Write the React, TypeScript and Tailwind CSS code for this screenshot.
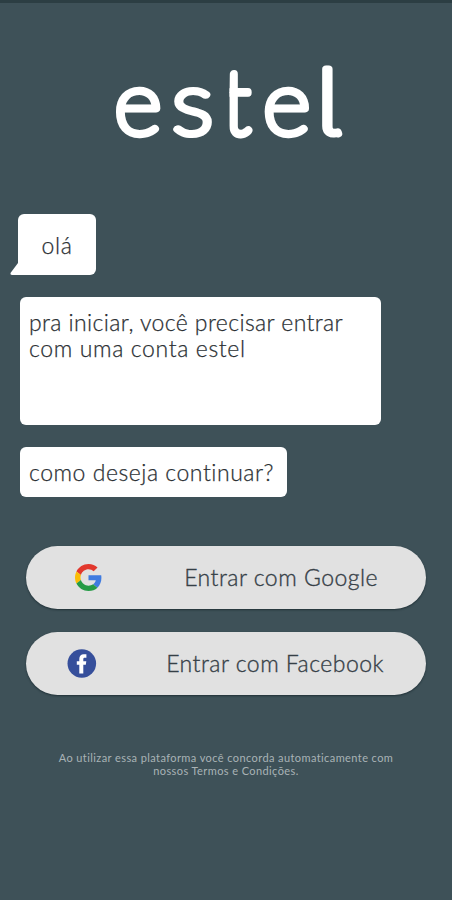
import type { ReactNode } from 'react';

const LETTERS = [
  { char: 'e', x: 4.3, scale: 1.04 },
  { char: 's', x: 62, scale: 1.12 },
  { char: 't', x: 113.2, scale: 0.94 },
  { char: 'e', x: 153, scale: 1.04 },
];

function Wordmark() {
  return (
    <svg
      viewBox="0 0 240 120"
      className="h-[120px] w-[240px]"
      role="img"
      aria-label="estel"
      fill="#fff"
      stroke="#fff"
      strokeWidth="7.6"
      strokeLinejoin="round"
      strokeLinecap="round"
    >
      {/* the crossbar of the t only runs to the right of its stem */}
      <clipPath id="half-bar">
        <path d="M119.3 0H240V120H119.3z" />
      </clipPath>
      {LETTERS.map((l) => (
        <g key={l.x} clipPath={l.char === 't' ? 'url(#half-bar)' : undefined}>
          <text
            transform={`translate(${l.x} 90.7) scale(${l.scale} 1)`}
            vectorEffect="non-scaling-stroke"
            fontSize="88"
            fontWeight="100"
            fontFamily="Lato, sans-serif"
          >
            {l.char}
          </text>
        </g>
      ))}
      <text
        transform="translate(206.5 90.7) scale(1.17 1.03)"
        vectorEffect="non-scaling-stroke"
        fontSize="86"
        fontWeight="100"
        fontFamily="Inter, sans-serif"
        style={{ fontFeatureSettings: "'cv05'" }}
      >
        l
      </text>
    </svg>
  );
}

function GoogleIcon() {
  return (
    <svg viewBox="0 0 48 48" className="h-[27px] w-[27px]">
      <path fill="#e2382d" d="M24 9.5c3.54 0 6.71 1.22 9.21 3.6l6.85-6.85C35.9 2.38 30.47 0 24 0 14.62 0 6.51 5.38 2.56 13.22l7.98 6.19C12.43 13.72 17.74 9.5 24 9.5z" />
      <path fill="#3f7be0" d="M46.98 24.55c0-1.57-.15-3.09-.38-4.55H24v9.02h12.94c-.58 2.96-2.26 5.48-4.78 7.18l7.73 6c4.51-4.18 7.09-10.36 7.09-17.65z" />
      <path fill="#fbbc05" d="M10.53 28.59c-.48-1.45-.76-2.99-.76-4.59s.27-3.14.76-4.59l-7.98-6.19C.92 16.46 0 20.12 0 24s.92 7.54 2.56 10.78l7.97-6.19z" />
      <path fill="#259b46" d="M24 48c6.48 0 11.93-2.13 15.89-5.81l-7.73-6c-2.15 1.45-4.92 2.3-8.16 2.3-6.26 0-11.57-4.22-13.47-9.91l-7.98 6.19C6.51 42.62 14.62 48 24 48z" />
    </svg>
  );
}

function FacebookIcon() {
  return (
    <svg viewBox="0 0 30 30" className="h-[30px] w-[30px]">
      <circle cx="14.8" cy="14.5" r="14.3" fill="#364f9b" />
      <path fill="#fff" d="M12.3 24.5v-8.7H9.8v-3.6h2.5V10c0-3.2 1.7-4.8 4.5-4.8h2.6v3.6h-1.6c-1.2 0-1.5.5-1.5 1.5v1.9h3l-.5 3.6h-2.5v8.7z" />
    </svg>
  );
}

function SocialButton({ icon, children, className }: { icon: ReactNode; children: ReactNode; className: string }) {
  return (
    <button
      className={`flex h-[63px] w-[400px] items-center justify-between rounded-full bg-[#e1e1e1] text-[23px] font-light tracking-[0.48px] text-[#364047] shadow-[0_1px_2px_rgba(20,35,42,0.7)] [-webkit-text-stroke:0.35px_#364047] ${className}`}
    >
      {icon}
      <span className="whitespace-nowrap">{children}</span>
    </button>
  );
}

export default function App() {
  return (
    <main className="flex h-[900px] w-[452px] flex-col items-start border-t-[3px] border-[#2c3e43] bg-[#3e5158] font-[Lato,sans-serif] text-[#2b3034]">
      <header className="ml-[110px] mt-[40px]">
        <Wordmark />
      </header>

      {/* Messages */}
      <div className="relative ml-[18px] mt-[51px] flex h-[61px] w-[78px] items-center justify-center rounded-[6px] bg-white text-[23px] font-light [-webkit-text-stroke:0.25px_#2b3034]">
        <svg viewBox="0 0 16 13" className="absolute -left-2 bottom-0 h-[13px] w-4">
          <path d="M8 1L0.5 11Q0 13 2 13H16V1z" fill="#fff" />
        </svg>
        <span className="relative top-px tracking-[0.6px]">olá</span>
      </div>
      <p className="ml-5 mt-[22px] h-[128px] w-[361px] whitespace-nowrap rounded-[6px] bg-white pl-[9px] pt-[12px] text-[23px] font-light leading-[26px] [-webkit-text-stroke:0.25px_#2b3034]">
        <span className="tracking-[0.39px]">pra iniciar, você precisar entrar</span>
        <br />
        <span className="tracking-[0.63px]">com uma conta estel</span>
      </p>
      <p className="ml-5 mt-[22px] flex h-[50px] w-[267px] items-center whitespace-nowrap rounded-[6px] bg-white pl-[9px] text-[23px] font-light tracking-[0.53px] [-webkit-text-stroke:0.25px_#2b3034]">
        como deseja continuar?
      </p>

      {/* Sign in options */}
      <div className="ml-[26px] mt-[49px] flex flex-col gap-[23px]">
        <SocialButton icon={<GoogleIcon />} className="pl-[49px] pr-[48px]">
          Entrar com Google
        </SocialButton>
        <SocialButton icon={<FacebookIcon />} className="pl-[41px] pr-[42px]">
          Entrar com Facebook
        </SocialButton>
      </div>

      <p className="mt-[56px] w-full text-center text-[11px] leading-[13px] tracking-[0.41px] text-[#a9b3b6]">
        Ao utilizar essa plataforma você concorda automaticamente com
        <br />
        nossos Termos e Condições.
      </p>
    </main>
  );
}
